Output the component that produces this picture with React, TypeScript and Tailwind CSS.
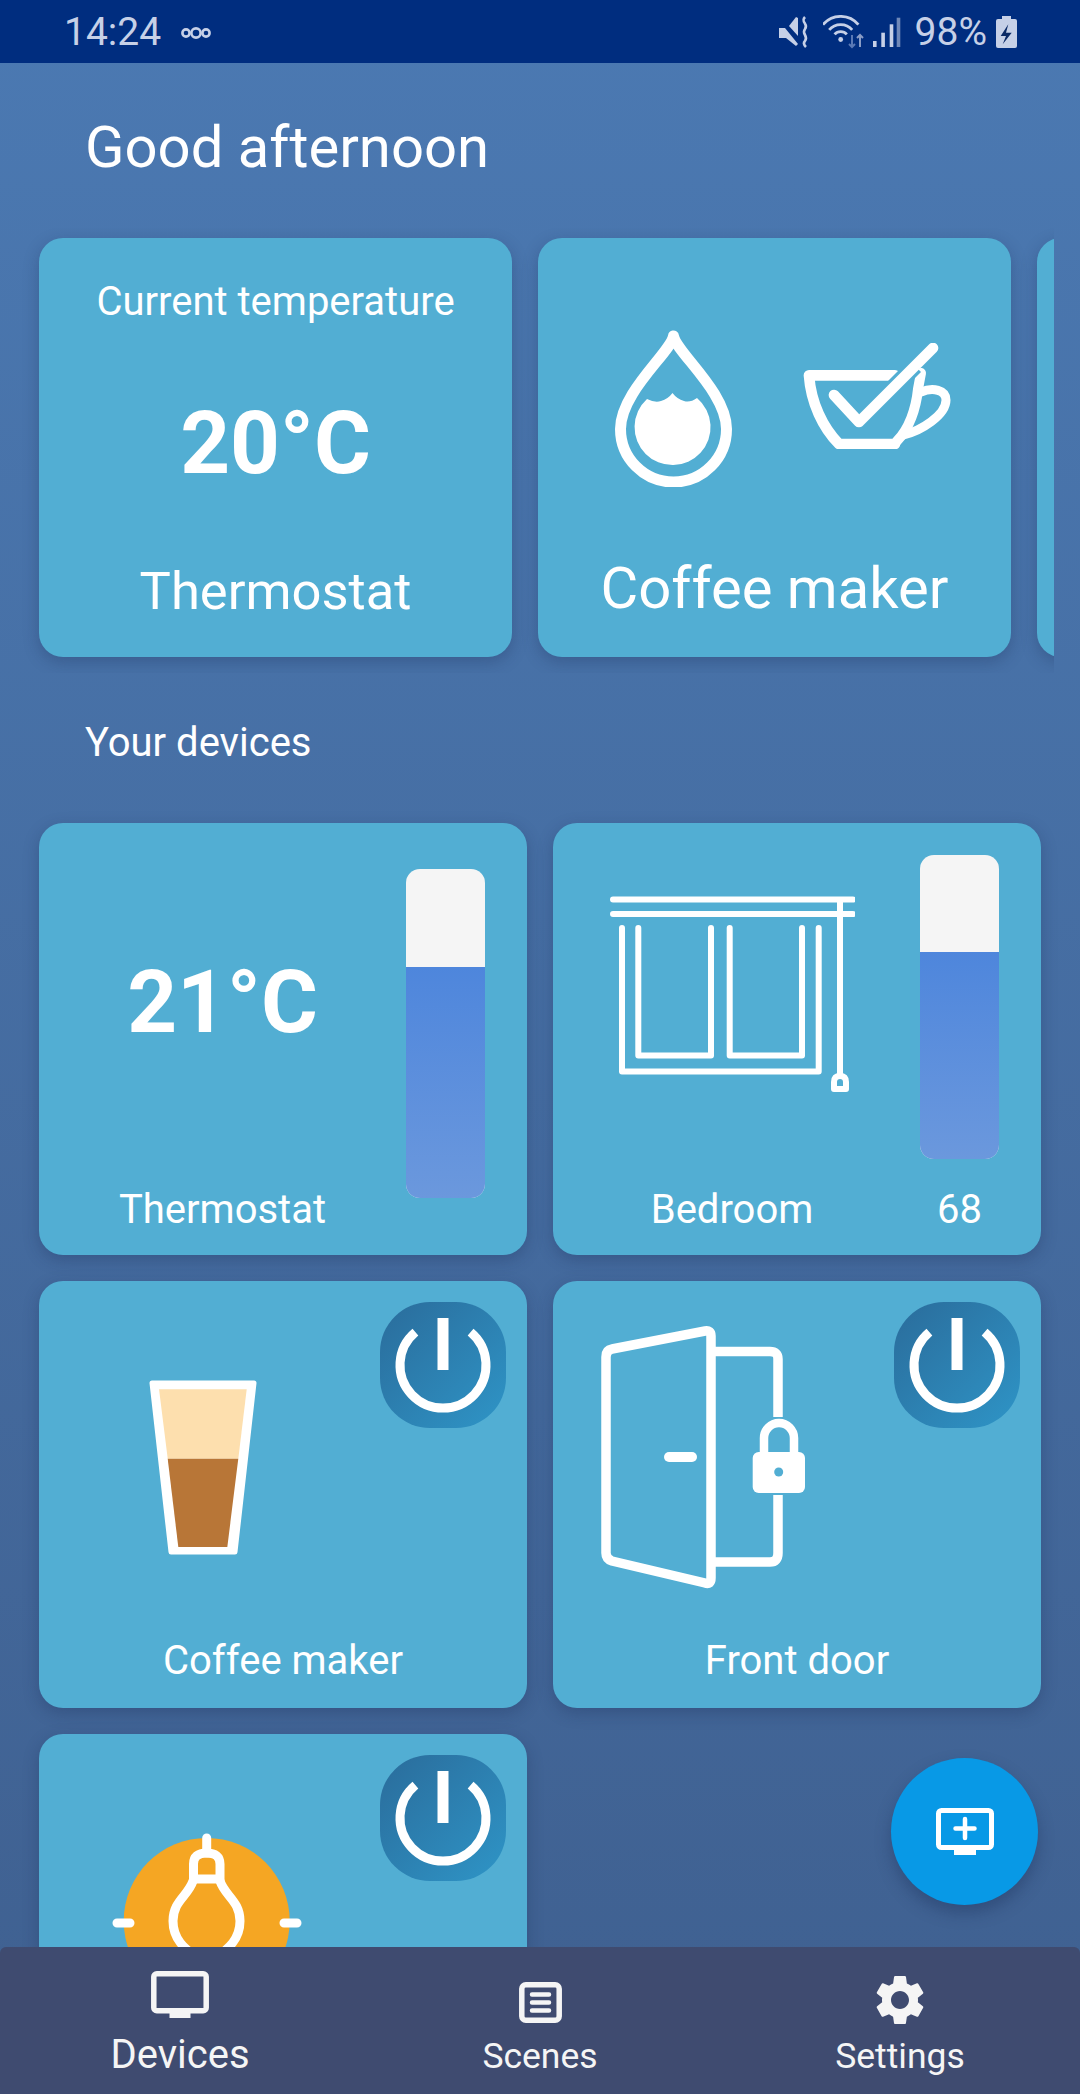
import { MdSettings } from "react-icons/md"

function StatusBar() {
  return (
    <div className="h-[63px] shrink-0 bg-[#002d7f] flex items-center text-[39px] leading-[44px] text-[#c6d0e7]">
      <span className="ml-[64px]">14:24</span>
      {/* link icon */}
      <svg className="ml-[19px] mt-[2px]" width="32" height="12" viewBox="0 0 32 12" fill="none" stroke="currentColor" strokeWidth="2.6">
        <circle cx="6" cy="6" r="3.6" />
        <circle cx="16" cy="6" r="4.6" />
        <circle cx="26" cy="6" r="3.6" />
      </svg>
      {/* vibrate */}
      <svg className="ml-auto" width="32" height="32" viewBox="0 0 32 32" fill="currentColor">
        <path d="M1 12H7L20 28L18 30L8 22H1Z" />
        <path d="M11 10L18 1L20 2V20Z" />
        <path d="M27 1C22 6 31 8 27 13C23 18 31 20 27 25C25 27 26 29 28 31" fill="none" stroke="currentColor" strokeWidth="2.6" />
      </svg>
      {/* wifi */}
      <svg className="ml-[13px]" width="42" height="34" viewBox="0 0 42 34" fill="none" stroke="currentColor" strokeWidth="2.8">
        <path d="M0 9.7A23 23 0 0 1 35.4 9.7M6.2 14.9A15 15 0 0 1 29.2 14.9M11.6 19.4A8 8 0 0 1 23.8 19.4" />
        <circle cx="17.7" cy="24.5" r="2.4" fill="currentColor" stroke="none" />
        <path d="M29 20V32M26 29L29 32L32 29" strokeWidth="2" stroke="#5a79b5" />
        <path d="M37 32V20M34 23L37 20L40 23" strokeWidth="2" stroke="#8a9dc6" />
      </svg>
      {/* signal */}
      <svg className="ml-[7px]" width="29" height="30" viewBox="0 0 29 30" fill="currentColor">
        <rect x="1" y="24" width="3.6" height="6" />
        <rect x="9.3" y="15.7" width="3.6" height="14.3" />
        <rect x="17.7" y="7.3" width="3.6" height="22.7" />
        <rect x="24.7" y="0.7" width="3.6" height="29.3" fill="#6f88b8" />
      </svg>
      <span className="ml-[14px]">98%</span>
      {/* battery */}
      <svg className="ml-[9px] mr-[63px]" width="21" height="32" viewBox="0 0 21 32">
        <rect x="6" y="0" width="9" height="4" fill="currentColor" />
        <rect x="0" y="3" width="21" height="29" rx="2" fill="currentColor" />
        <path d="M12.3 8.3L4.7 20H10L6.7 28.3L15.7 16.7H10Z" fill="#0b2a66" />
      </svg>
    </div>
  )
}

function PowerButton() {
  return (
    <div className="absolute top-[21px] right-[21px] w-[126px] h-[126px] rounded-[50px] bg-gradient-to-br from-[#2a6c9b] to-[#2e95c7]">
      <svg width="126" height="126" viewBox="0 0 126 126" fill="none" stroke="white">
        <path d="M35.4 30.1A43 43 0 1 0 90.6 30.1" strokeWidth="9" />
        <path d="M63 16V68" strokeWidth="11" />
      </svg>
    </div>
  )
}

function Slider({ track, level, margin }: { track: string; level: string; margin: string }) {
  return (
    <div className={`w-[79px] rounded-[14px] overflow-hidden flex flex-col bg-[#f5f5f5] ${track} ${margin}`}>
      <div className={level} />
      <div className="flex-1 bg-gradient-to-b from-[#4e86dc] to-[#6b98dd]" />
    </div>
  )
}

function DropIcon() {
  return (
    <svg width="117" height="157" viewBox="0 0 117 157" fill="none">
      <path d="M58.5 6C56 22 5.5 62 5.5 99A53 53 0 0 0 111.5 99C111.5 62 61 22 58.5 6Z" stroke="white" strokeWidth="11" strokeLinejoin="round" />
      <path d="M32 69Q40 73 46 71Q53 69 57.5 63Q62 69 69 71Q75 73 82 68A38 38 0 1 1 32 69Z" fill="white" />
    </svg>
  )
}

function CupIcon() {
  return (
    <svg className="ml-[71px] mt-[13px]" width="148" height="106" viewBox="0 0 148 106" fill="none" stroke="white" strokeLinecap="round" strokeLinejoin="round">
      <path d="M92 32.3H6C8 60 20 85 36 101H92" strokeWidth="10.7" />
      <path d="M94 98C106 86 113 66 115 46L118 30" strokeWidth="10" />
      <path d="M118 49C130 44 143 47 143 57C143 72 118 88 100 92" strokeWidth="9" />
      <path d="M72 63L112 23" stroke="#52aed3" strokeWidth="17" strokeLinecap="butt" />
      <path d="M31 52L56 79L130 5" strokeWidth="10.7" />
    </svg>
  )
}

function BlindsIcon() {
  return (
    <svg className="ml-[57px] mt-[68px]" width="245" height="205" viewBox="60 80 245 205" fill="none" stroke="white" strokeWidth="6" strokeLinecap="round" strokeLinejoin="round">
      <path d="M63 88.5H303M63 103H303" />
      <path d="M72 117V260.5H268.7V117" />
      <path d="M88.3 117V244.5H161V117" />
      <path d="M179.7 117V244.5H252V117" />
      <path d="M290 90V265" strokeLinecap="butt" />
      <path d="M284 278V271Q284 265 290 265Q296 265 296 271V278Z" />
    </svg>
  )
}

function GlassIcon() {
  return (
    <svg className="ml-[110px] mt-[99px]" width="108" height="176" viewBox="0 0 108 176">
      <path d="M3 3H105L86 172H22Z" fill="white" stroke="white" strokeWidth="5" strokeLinejoin="round" />
      <path d="M10 9.3H97.7L89.3 78.7H18.7Z" fill="#fddfae" />
      <path d="M18.7 78.7H89.3L78.3 167H29.3Z" fill="#b87637" />
    </svg>
  )
}

function DoorIcon() {
  return (
    <svg className="ml-[42px] mt-[40px]" width="215" height="270" viewBox="45 50 215 270" fill="none" stroke="white" strokeWidth="10" strokeLinecap="round">
      <path d="M62 78L155 60Q161 59 161 65V307Q161 314 155 312L62 290Q56 288 56 282V86Q56 79 62 78Z" strokeWidth="9.5" />
      <path d="M161 80.5H220Q228 80.5 228 88V146" strokeWidth="9.5" strokeLinecap="butt" />
      <path d="M228 224V282Q228 291 220 291H161" strokeWidth="9.5" strokeLinecap="butt" />
      <path d="M119 186H142" />
      <path d="M214 185V167A15 15 0 0 1 244 167V185" strokeWidth="8.5" />
      <rect x="202.7" y="181" width="52.3" height="41" rx="6" fill="white" stroke="none" />
      <circle cx="228.7" cy="201" r="4.5" fill="#52aed3" stroke="none" />
    </svg>
  )
}

function BulbIcon() {
  return (
    <svg className="ml-[71px] mt-[97px]" width="192" height="130" viewBox="80 110 192 130" fill="none" stroke="white" strokeWidth="9" strokeLinecap="round">
      <circle cx="176.7" cy="200" r="83" fill="#f5a623" stroke="none" />
      <path d="M176.7 117V132" />
      <path d="M87 202H100M254 202H267" strokeWidth="9" />
      <path d="M163.5 158V143Q163.5 132 176.5 132Q190 132 190 143V158Z" />
      <path d="M163 160C158 175 143 180 143 200C143 218 155 228 165 235M190 160C195 175 210 180 210 200C210 218 198 228 188 235" />
    </svg>
  )
}

function NavItem({ label, icon, iconClass, labelClass }: { label: string; icon: React.ReactNode; iconClass: string; labelClass: string }) {
  return (
    <div className="flex flex-col items-center text-[#f5f5f5]">
      <div className={iconClass}>{icon}</div>
      <span className={labelClass}>{label}</span>
    </div>
  )
}

const card = "relative rounded-[24px] bg-[#52aed3] text-white shadow-[0_5px_16px_rgba(20,40,80,0.28)]"

export default function App() {
  return (
    <div className="relative w-[1080px] h-[2094px] overflow-hidden flex flex-col font-['Roboto',sans-serif] bg-gradient-to-b from-[#4b79b2] to-[#3f6090]">
      <StatusBar />

      <main className="flex-1 min-h-0 overflow-hidden">
        <h1 className="ml-[85px] mt-[54px] text-[58px] leading-[60px] text-white">Good afternoon</h1>

        {/* Favourites carousel */}
        <div className="ml-[20px] mt-[51px] w-[1034px] h-[445px] overflow-hidden flex gap-[26px] pl-[19px] pt-[10px]">
          <div className={`${card} shrink-0 w-[473px] h-[419px] flex flex-col items-center`}>
            <span className="mt-[42px] text-[40px] leading-[44px]">Current temperature</span>
            <span className="mt-[69px] text-[87px] leading-[100px] font-bold">20°C</span>
            <span className="mt-[68px] text-[52.5px] leading-[60px]">Thermostat</span>
          </div>
          <div className={`${card} shrink-0 w-[473px] h-[419px] flex flex-col`}>
            <div className="flex items-start ml-[77px] mt-[92px]">
              <DropIcon />
              <CupIcon />
            </div>
            <span className="mt-[71px] self-center text-[58px] leading-[60px]">Coffee maker</span>
          </div>
          <div className={`${card} shrink-0 w-[473px] h-[419px]`} />
        </div>

        <h2 className="ml-[85px] mt-[47px] text-[40px] leading-[46px] text-white">Your devices</h2>

        {/* Device grid */}
        <div className="mt-[57px] px-[39px] grid grid-cols-[488px_488px] gap-x-[26px] gap-y-[26px] auto-rows-[427px] grid-rows-[432px_427px]">
          <div className={`${card} flex`}>
            <div className="w-[367px] flex flex-col items-center">
              <span className="mt-[129px] text-[87px] leading-[100px] font-bold">21°C</span>
              <span className="mt-[135px] text-[40px] leading-[46px]">Thermostat</span>
            </div>
            <Slider track="h-[329px]" level="h-[98px]" margin="mt-[46px]" />
          </div>

          <div className={`${card} flex`}>
            <div className="w-[367px] flex flex-col">
              <BlindsIcon />
              <span className="mt-[91px] self-center -ml-[9px] text-[40px] leading-[46px]">Bedroom</span>
            </div>
            <div className="flex flex-col items-center">
              <Slider track="h-[304px]" level="h-[97px]" margin="mt-[32px]" />
              <span className="mt-[28px] text-[40px] leading-[46px]">68</span>
            </div>
          </div>

          <div className={`${card} flex flex-col`}>
            <PowerButton />
            <GlassIcon />
            <span className="mt-auto mb-[24px] self-center text-[40px] leading-[46px]">Coffee maker</span>
          </div>

          <div className={`${card} flex flex-col`}>
            <PowerButton />
            <DoorIcon />
            <span className="mt-auto mb-[24px] self-center text-[40px] leading-[46px]">Front door</span>
          </div>

          <div className={`${card} flex flex-col`}>
            <PowerButton />
            <BulbIcon />
          </div>
        </div>
      </main>

      {/* Add device */}
      <button className="absolute left-[891px] top-[1758px] w-[147px] h-[147px] rounded-full bg-[#0899e6] shadow-[0_8px_16px_rgba(20,40,80,0.35)] flex items-center justify-center">
        <svg width="58" height="47" viewBox="0 0 58 47" fill="none" stroke="white">
          <rect x="2.5" y="2.5" width="53" height="37" rx="3" strokeWidth="5" />
          <path d="M18 41H40V47H18Z" fill="white" stroke="none" />
          <path d="M29 11V30M19.5 20.5H38.5" strokeWidth="4.5" strokeLinecap="round" />
        </svg>
      </button>

      <nav className="relative h-[147px] shrink-0 bg-[#3f4b70] rounded-t-[6px] grid grid-cols-3">
        <NavItem
          label="Devices"
          iconClass="pt-[24px]"
          labelClass="mt-[14px] text-[40px] leading-[46px]"
          icon={
            <svg className="block" width="58" height="47" viewBox="0 0 58 47" fill="none" stroke="#f5f5f5">
              <rect x="2.8" y="2.8" width="52.4" height="37" rx="3" strokeWidth="5.5" />
              <path d="M18.5 41H39.5V47H18.5Z" fill="#f5f5f5" stroke="none" />
            </svg>
          }
        />
        <NavItem
          label="Scenes"
          iconClass="pt-[35px]"
          labelClass="mt-[11px] text-[35.5px] leading-[44px]"
          icon={
            <svg className="block" width="43" height="41" viewBox="0 0 43 41" fill="none" stroke="#f5f5f5" strokeWidth="5.5" strokeLinecap="round">
              <rect x="2.8" y="2.8" width="37.4" height="35.4" rx="4" />
              <path d="M13 12.5H30M13 20.5H30M13 28.5H30" strokeWidth="4.5" />
            </svg>
          }
        />
        <NavItem
          label="Settings"
          iconClass="pt-[23px]"
          labelClass="mt-[4px] text-[35.5px] leading-[44px]"
          icon={<MdSettings className="block" size={60} color="#f5f5f5" />}
        />
      </nav>
    </div>
  )
}
